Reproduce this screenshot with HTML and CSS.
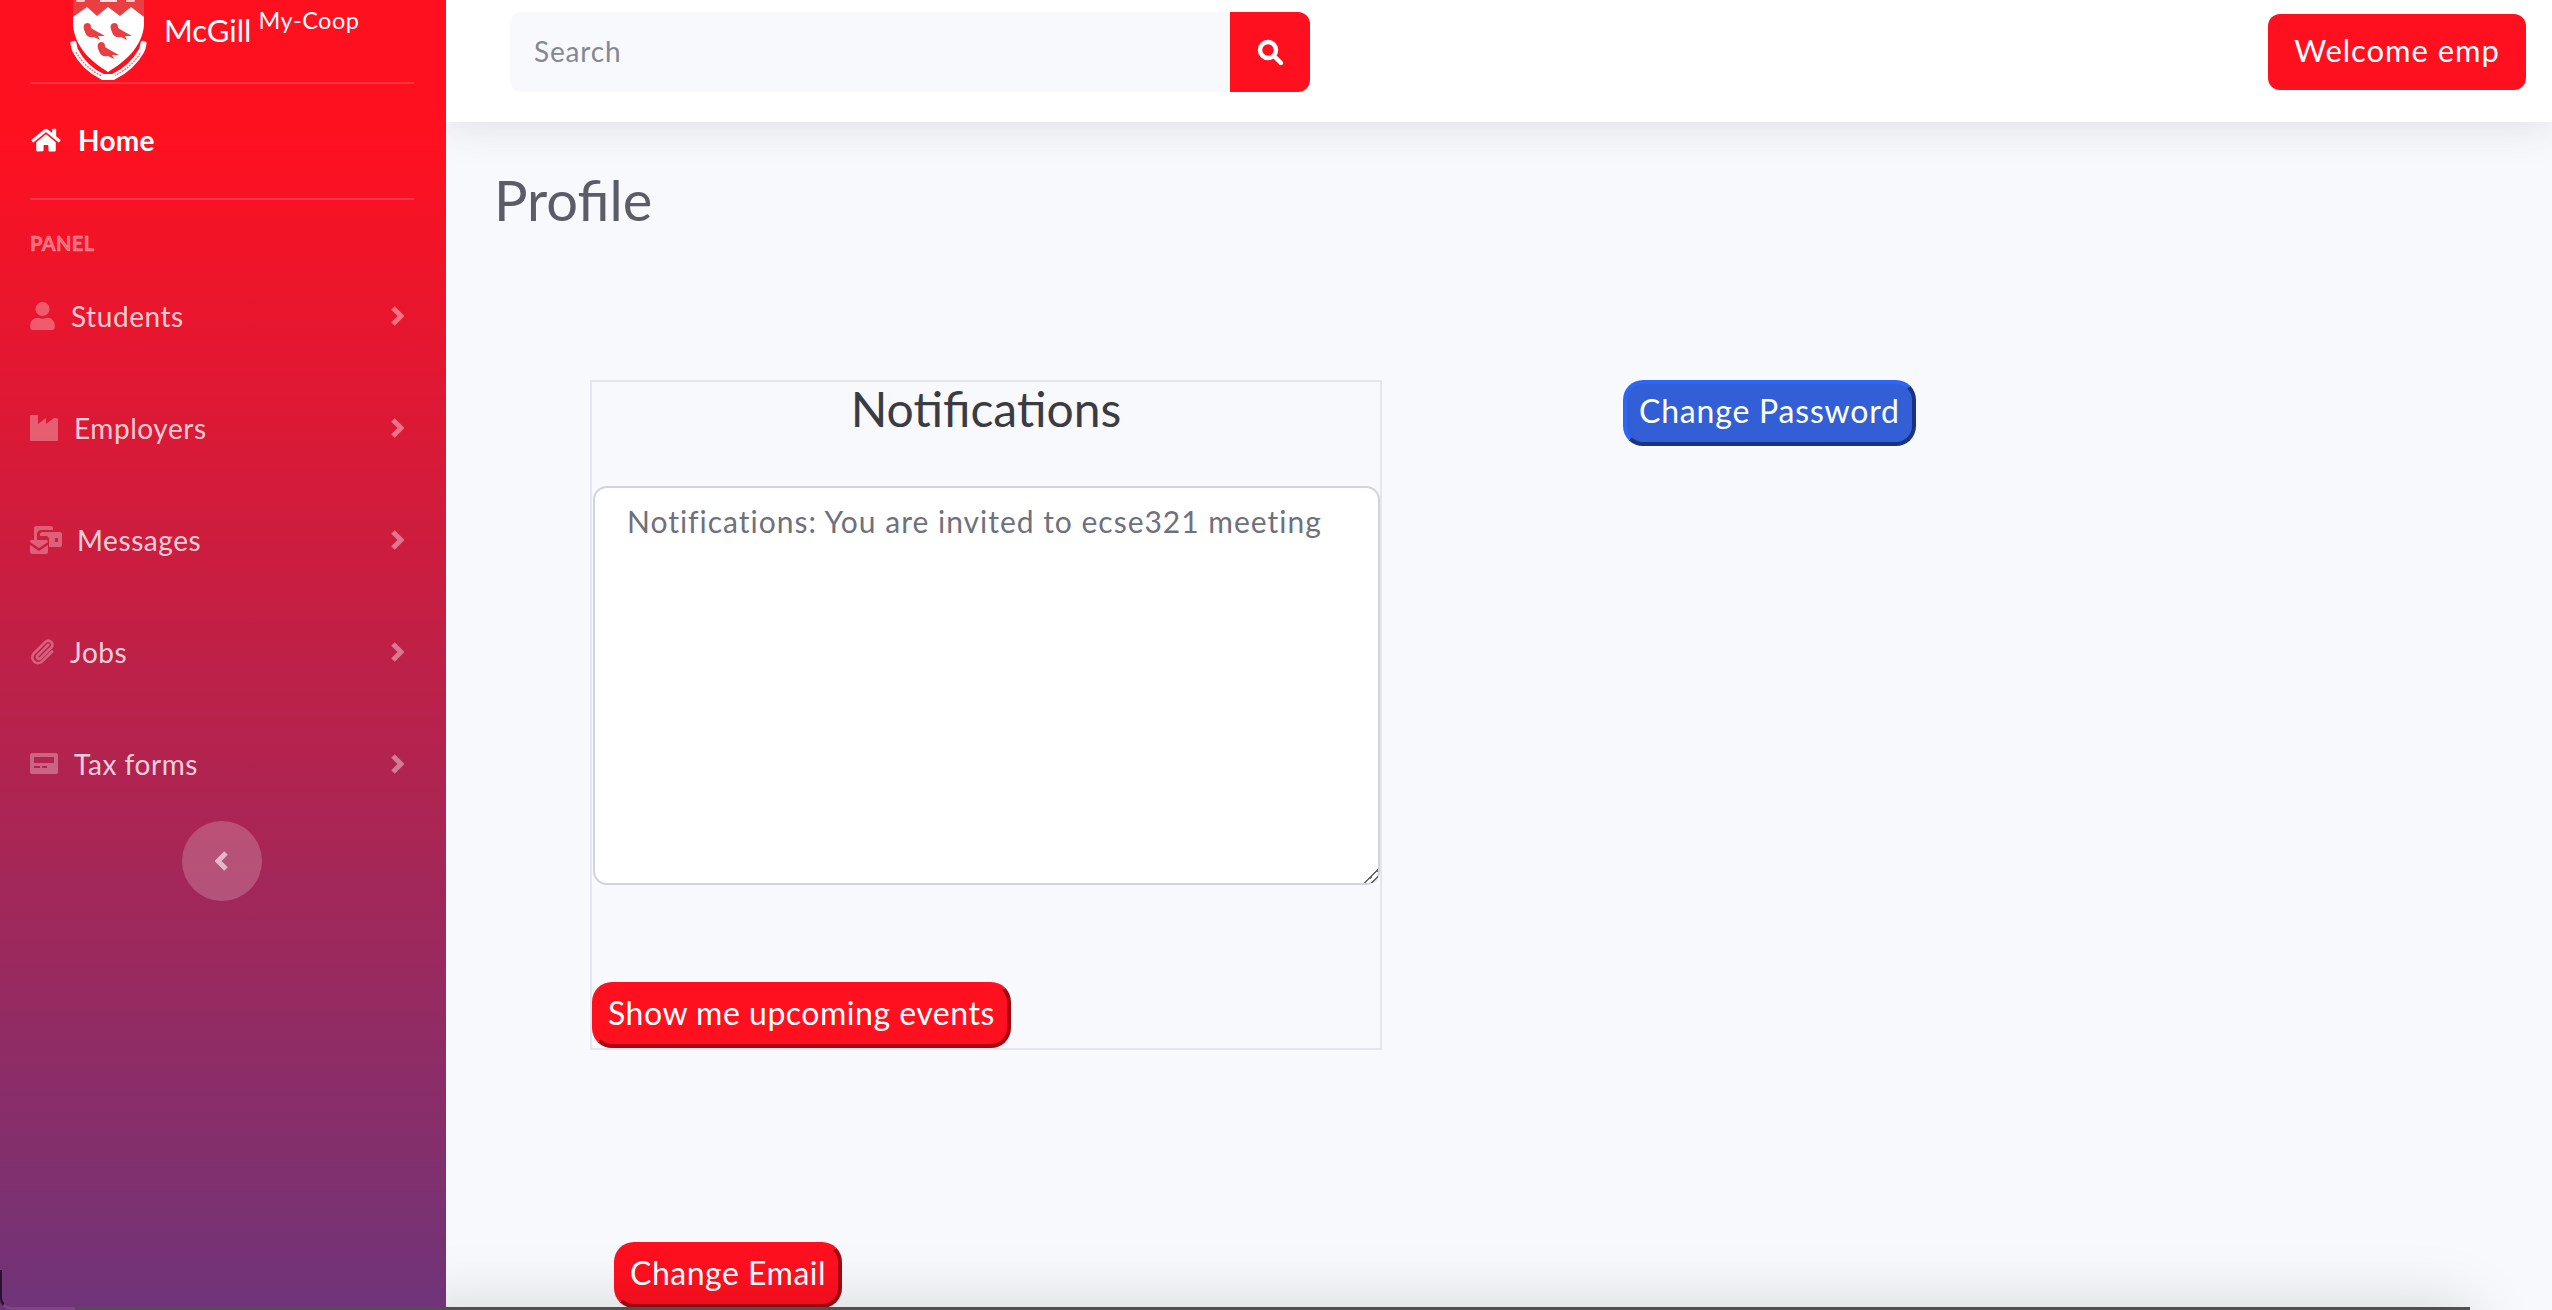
FILE: index.html
```html
<!DOCTYPE html>
<html lang="en">
<head>
    <meta charset="UTF-8">
    <meta name="viewport" content="width=device-width, initial-scale=1.0">
    <title>McGill My-Coop - Profile</title>
    <link rel="stylesheet" href="styles.css">
</head>
<body>
    <div class="wrapper">
        <aside class="sidebar">
            <div class="brand">
                <svg class="crest" viewBox="68 0 84 82" width="84" height="82">
                    <defs>
                        <path id="bird" d="M1 2C2 0 5-1 7 1C8 2 8 4 8 5L13 8L22 13L15 13L17 17L11 14C6 15 3 13 2 9C1 7 0 4 1 2Z" fill="#ea3f42"/>
                    </defs>
                    <path d="M73 -6H144V25C142 48 124 62 108 72C92 62 75 48 73 25Z" fill="#ea3f42"/>
                    <path d="M73 17L87 7L97 16L108 7L120 16L131 7L144 17V25C142 48 124 62 108 72C92 62 75 48 73 25Z" fill="#fff"/>
                    <rect x="76" y="0" width="9" height="2" rx="1" fill="#f9c9c9"/>
                    <rect x="100" y="0" width="17" height="2" fill="#fbdcdc"/>
                    <rect x="126" y="0" width="9" height="2" rx="1" fill="#f9c9c9"/>
                    <use href="#bird" x="83" y="23"/>
                    <use href="#bird" x="110" y="23"/>
                    <use href="#bird" x="97" y="42"/>
                    <path d="M75 50Q84 68 103 77H113Q132 68 142 50" fill="none" stroke="#fff" stroke-width="6"/>
                    <path d="M76 52Q85 68 102 76M114 76Q131 68 141 52" fill="none" stroke="#f47a7c" stroke-width="1.500" stroke-dasharray="2 1"/>
                    <rect x="71" y="41" width="6" height="10" rx="2" transform="rotate(-12 74 46)" fill="#fff"/>
                    <rect x="140" y="41" width="6" height="10" rx="2" transform="rotate(12 143 46)" fill="#fff"/>
                    <rect x="103" y="75" width="12" height="4" fill="#fff"/>
                </svg>
                <span class="brand-name">McGill<sup>My-Coop</sup></span>
            </div>
            <hr class="divider">
            <a class="nav-home" href="#">
                <svg class="icon" viewBox="0 0 576 512" width="32" height="26"><path fill="currentColor" d="M280 148L96 300v164c0 9 7 16 16 16l112-.3c9 0 16-7 16-16V368c0-9 7-16 16-16h64c9 0 16 7 16 16v96c0 9 7 16 16 16l112 .3c9 0 16-7 16-16V300L296 148c-4.500-3.500-11.500-3.500-16 0zM572 251l-84-69V44c0-7-5-12-12-12h-56c-7 0-12 5-12 12v72l-89-73c-18-14-43-14-61 0L4 251c-5 4-6 12-2 17l26 31c4 5 12 6 17 2L280 107c4.500-3.500 11.500-3.500 16 0l235 194c5 4 13 3 17-2l26-31c4-5 3-13-2-17z"/></svg>
                <span>Home</span>
            </a>
            <hr class="divider">
            <div class="panel-title">PANEL</div>
            <a class="nav-item" href="#">
                <svg class="icon" viewBox="0 0 448 512" width="25" height="28"><path fill="currentColor" d="M224 256a128 128 0 1 0 0-256 128 128 0 0 0 0 256zm90 32h-17a174 174 0 0 1-146 0h-17C60 288 0 348 0 422v42c0 26 22 48 48 48h352c26 0 48-22 48-48v-42c0-74-60-134-134-134z"/></svg>
                <span class="label label-students">Students</span>
                <svg class="chevron" viewBox="0 0 14 22" width="14" height="22"><path d="M3 3l8 8-8 8" fill="none" stroke="currentColor" stroke-width="5"/></svg>
            </a>
            <a class="nav-item" href="#">
                <svg class="icon" viewBox="0 0 28 26" width="28" height="26"><path fill="currentColor" d="M0 1c0-.6.400-1 1-1h7v9l8-6v6l8-6c1 0 4 0 4 1v21c0 1-.400 2-2 2H2c-1 0-2-1-2-2z"/></svg>
                <span class="label label-employers">Employers</span>
                <svg class="chevron" viewBox="0 0 14 22" width="14" height="22"><path d="M3 3l8 8-8 8" fill="none" stroke="currentColor" stroke-width="5"/></svg>
            </a>
            <a class="nav-item" href="#">
                <svg class="icon" viewBox="0 0 32 28" width="32" height="28"><path fill="currentColor" d="M4 2c0-1 1-2 2-2h15c1 0 2 1 2 2v2H11c-2 0-4 2-4 4v6H4zM10 8c0-1 1-2 2-2h18c1 0 2 1 2 2v11c0 1-1 2-2 2H19v-8c0-2-2-3-3-3h-6zM25 12v4h3v-4zM0 16c0-2 1-2 2-2h14c1 0 2 .500 2 2l-9 6zM0 19l9 6 9-6v7c0 1-1 2-2 2H2c-1 0-2-1-2-2z"/></svg>
                <span class="label label-messages">Messages</span>
                <svg class="chevron" viewBox="0 0 14 22" width="14" height="22"><path d="M3 3l8 8-8 8" fill="none" stroke="currentColor" stroke-width="5"/></svg>
            </a>
            <a class="nav-item" href="#">
                <svg class="icon" viewBox="0 0 26 29" width="25" height="28"><path fill="none" stroke="currentColor" stroke-width="2.800" stroke-linecap="round" d="M19 7L8 18C6 20 9 23 11 21L22 10C26 6 20 0 16 4L4 16C-1 22 7 30 13 24L23 14"/></svg>
                <span class="label label-jobs">Jobs</span>
                <svg class="chevron" viewBox="0 0 14 22" width="14" height="22"><path d="M3 3l8 8-8 8" fill="none" stroke="currentColor" stroke-width="5"/></svg>
            </a>
            <a class="nav-item" href="#">
                <svg class="icon" viewBox="0 0 28 21" width="28" height="21"><path fill="currentColor" fill-rule="evenodd" d="M2 0h24c1 0 2 1 2 2v17c0 1-1 2-2 2H2c-1 0-2-1-2-2V2c0-1 1-2 2-2zM5 4c-1 0-1 0-1 1v4c0 1 0 1 1 1h18c1 0 1 0 1-1V5c0-1 0-1-1-1zM4 13v2h6v-2zM12 13v2h5v-2z"/></svg>
                <span class="label label-tax">Tax forms</span>
                <svg class="chevron" viewBox="0 0 14 22" width="14" height="22"><path d="M3 3l8 8-8 8" fill="none" stroke="currentColor" stroke-width="5"/></svg>
            </a>
            <button class="toggle">
                <svg viewBox="0 0 14 22" width="14" height="22"><path d="M11 3l-8 8 8 8" fill="none" stroke="currentColor" stroke-width="5"/></svg>
            </button>
        </aside>

        <div class="content">
            <header class="topbar">
                <form class="search">
                    <input class="search-input" type="text" placeholder="Search">
                    <button class="search-button" type="button">
                        <svg viewBox="0 0 26 26" width="26" height="26"><circle cx="11" cy="11" r="8" fill="none" stroke="#fff" stroke-width="4.500"/><path d="M17 17l7 7" stroke="#fff" stroke-width="4.500" stroke-linecap="round"/></svg>
                    </button>
                </form>
                <button class="welcome">Welcome emp</button>
            </header>

            <main class="page">
                <h1 class="page-title">Profile</h1>
                <div class="columns">
                    <section class="notifications">
                        <h2>Notifications</h2>
                        <textarea class="notes" readonly>Notifications: You are invited to ecse321 meeting</textarea>
                        <button class="btn btn-red">Show me upcoming events</button>
                    </section>
                    <button class="btn btn-blue">Change Password</button>
                </div>
                <button class="btn btn-red btn-email">Change Email</button>
            </main>
            <div class="page-bottom"></div>
        </div>
    </div>
    <div class="window-corner"></div>
    <div class="window-edge"></div>
</body>
</html>
```

FILE: styles.css
```css
html, body {
    margin: 0;
    height: 100%;
    overflow: hidden;
}

body {
    font-family: Lato, "Noto Sans", sans-serif;
    background: #f8f9fc;
    color: #6e707e;
}

.wrapper {
    display: flex;
    height: 1310px;
}

/* sidebar */
.sidebar {
    width: 446px;
    flex-shrink: 0;
    display: flex;
    flex-direction: column;
    background: linear-gradient(180deg, #ff101f 10%, #6f3479 100%);
    color: #fff;
    z-index: 2;
}

.brand {
    height: 82px;
    display: flex;
    align-items: flex-start;
    padding-left: 68px;
    overflow: hidden;
}

.crest {
    flex-shrink: 0;
}

.brand-name {
    margin: 9px 0 0 12px;
    font-size: 31px;
    line-height: 42px;
    white-space: nowrap;
}

.brand-name sup {
    font-size: 23.500px;
    line-height: 0;
    vertical-align: 13px;
    margin-left: 7px;
    letter-spacing: .02em;
}

.divider {
    margin: 0 32px 0 30px;
    border: 0;
    border-top: 2px solid rgba(255, 255, 255, .15);
}

.nav-home {
    height: 112px;
    padding: 0 0 2px 30px;
    display: flex;
    align-items: center;
    gap: 16px;
    color: #fff;
    font-size: 28px;
    font-weight: 700;
    letter-spacing: .01em;
    text-decoration: none;
}

.panel-title {
    margin: 29px 30px 0;
    height: 29px;
    line-height: 29px;
    font-size: 20px;
    font-weight: 700;
    letter-spacing: .02em;
    color: rgba(255, 255, 255, .4);
    -webkit-text-stroke: .5px rgba(255, 255, 255, .4);
}

.nav-item {
    box-sizing: border-box;
    height: 112px;
    padding: 0 42px 3px 30px;
    display: flex;
    align-items: center;
    color: rgba(255, 255, 255, .8);
    font-size: 28px;
    letter-spacing: .02em;
    text-decoration: none;
}

.panel-title + .nav-item {
    margin-top: 3px;
}

.nav-item .icon {
    color: rgba(255, 255, 255, .3);
    flex-shrink: 0;
}

.nav-item .chevron {
    color: rgba(255, 255, 255, .4);
    margin-left: auto;
}

.label-students { margin-left: 16px; }
.label-employers { margin-left: 16px; }
.label-messages { margin-left: 15px; }
.label-jobs { margin-left: 15px; }
.label-tax { margin-left: 16px; }

.toggle {
    width: 80px;
    height: 80px;
    margin: 0 0 0 182px;
    padding: 0;
    border: 0;
    border-radius: 50%;
    background: rgba(255, 255, 255, .2);
    color: rgba(255, 255, 255, .6);
    display: flex;
    align-items: center;
    justify-content: center;
}

/* topbar */
.content {
    flex: 1;
    min-width: 0;
    display: flex;
    flex-direction: column;
}

.topbar {
    height: 122px;
    flex-shrink: 0;
    padding: 0 26px 0 64px;
    display: flex;
    align-items: center;
    justify-content: space-between;
    background: #fff;
    box-shadow: 0 2px 44px rgba(58, 59, 69, .15);
    z-index: 1;
}

.search {
    display: flex;
    width: 800px;
    height: 80px;
    margin-top: -18px;
}

.search-input {
    flex: 1;
    border: 0;
    padding: 0 24px 2px;
    background: #f8f9fc;
    border-radius: 12px 0 0 12px;
    font-family: inherit;
    font-size: 28px;
    letter-spacing: .03em;
    outline: none;
}

.search-input::placeholder {
    color: #858796;
}

.search-button {
    width: 80px;
    border: 0;
    padding: 0;
    background: #ff101f;
    border-radius: 0 12px 12px 0;
    display: flex;
    align-items: center;
    justify-content: center;
}

.welcome {
    width: 258px;
    height: 76px;
    margin-top: -18px;
    padding: 0 0 4px;
    border: 0;
    border-radius: 12px;
    background: #ff101f;
    color: #fff;
    font-family: inherit;
    font-size: 31px;
    letter-spacing: .03em;
}

/* page */
.page {
    flex: 1;
    min-height: 0;
    padding: 0 0 0 48px;
}

.page-title {
    margin: 38px 0 0;
    font-size: 56px;
    line-height: 80px;
    font-weight: 400;
    color: #5a5c69;
}

.columns {
    display: flex;
    align-items: flex-start;
    margin: 140px 0 0 96px;
}

.notifications {
    box-sizing: border-box;
    width: 792px;
    height: 670px;
    border: 2px solid #e3e6f0;
}

.notifications h2 {
    margin: 0;
    height: 104px;
    font-size: 48px;
    line-height: 54px;
    font-weight: 400;
    text-align: center;
    color: #3a3b45;
}

.notes {
    display: block;
    box-sizing: border-box;
    width: 787px;
    height: 399px;
    margin-left: 1px;
    padding: 14px 32px;
    border: 2px solid #d1d3e2;
    border-radius: 14px;
    background: #fff;
    color: #6e707e;
    font-family: inherit;
    font-size: 30px;
    line-height: 38px;
    letter-spacing: .033em;
    outline: none;
}

.notes::-webkit-resizer {
    background: linear-gradient(135deg, transparent 52%, #666 52%, #666 60%, transparent 60%, transparent 74%, #666 74%, #666 82%, transparent 82%);
}

.btn {
    box-sizing: border-box;
    height: 66px;
    padding: 0 12px 5px;
    border: 4px solid;
    border-radius: 20px;
    color: #fff;
    font-family: inherit;
    font-size: 32px;
    line-height: 1;
    letter-spacing: .016em;
    white-space: nowrap;
}

.btn-red {
    background: #ff101f;
    border-color: #ff101f #a50812 #a50812 #ff101f;
}

.btn-blue {
    background: #335fd6;
    border-color: #2d65f5 #1a3480 #1a3480 #2d65f5;
    margin-left: 241px;
    letter-spacing: .025em;
}

.notifications .btn-red {
    margin-top: 97px;
}

.btn-email {
    display: block;
    margin: 192px 0 0 120px;
}

/* soft shadow above the bottom edge of the window */
.page-bottom {
    height: 3px;
    flex-shrink: 0;
    margin-right: 122px;
    box-shadow: 0 40px 66px 40px rgba(0, 0, 0, .15);
    z-index: 1;
}

.window-edge {
    position: absolute;
    left: 75px;
    right: 82px;
    bottom: 0;
    height: 3px;
    background: #505050;
    z-index: 3;
}

.window-corner {
    position: absolute;
    left: 0;
    bottom: 0;
    width: 75px;
    height: 40px;
    box-sizing: border-box;
    border-left: 2px solid #2a1030;
    border-bottom: 3px solid #7f4488;
    border-bottom-left-radius: 12px;
    z-index: 3;
}
```
